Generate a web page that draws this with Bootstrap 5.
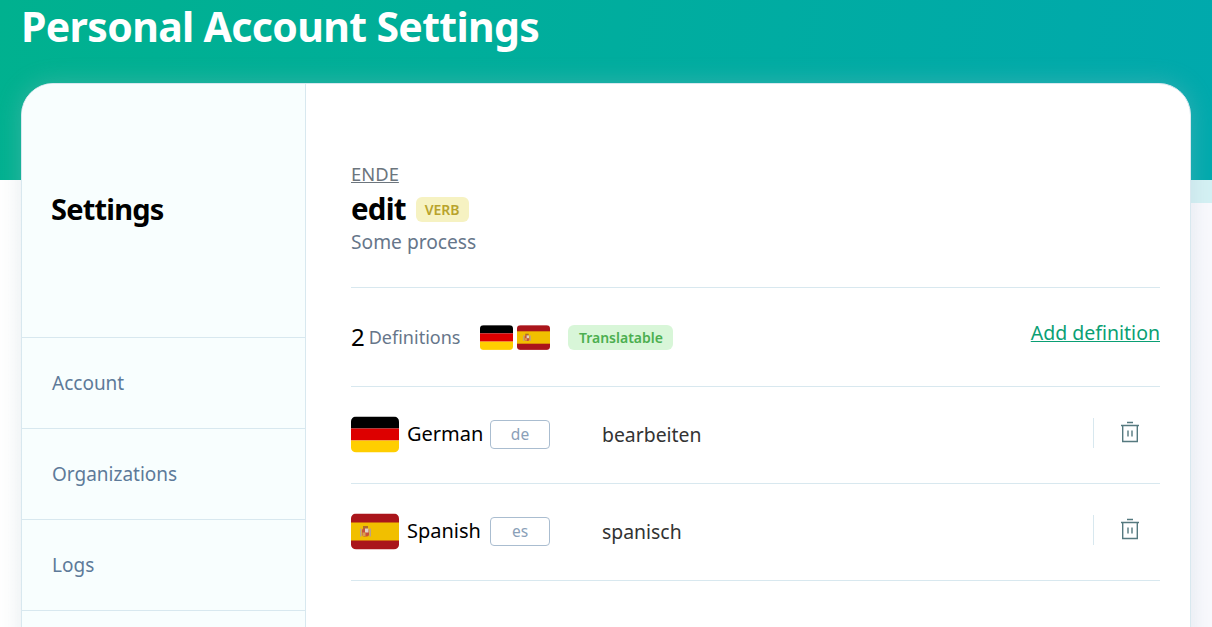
<!DOCTYPE html>
<html lang="en">
<head>
    <meta charset="UTF-8">
    <meta name="viewport" content="width=device-width, initial-scale=1.0">
    <title>Personal Account Settings</title>
    <link href="https://cdn.jsdelivr.net/npm/bootstrap@5.3.0/dist/css/bootstrap.min.css" rel="stylesheet">
    <style>
        html, body { height: 100%; overflow: hidden; }
        body {
            font-family: "Noto Sans", "Open Sans", sans-serif;
            background:
                linear-gradient(100deg, #00b18f 0%, #00a9ad 100%) 0 0 / 100% 180px no-repeat,
                linear-gradient(#d4f1f4, #d4f1f4) 100% 180px / 21px 23px no-repeat,
                linear-gradient(90deg, #fff 0%, #f9f9fd 100%);
        }
        .page-wrap { padding: 0 21px; height: 627px; overflow: hidden; }
        .page-title {
            font-size: 41px; font-weight: 700; color: #fff; line-height: 52px;
            height: 83px; margin: 0; letter-spacing: -.66px;
        }
        .settings-box {
            height: 600px; background: #fff; border: 1px solid #d8e8ef; border-radius: 32px;
            overflow: hidden; box-shadow: 0 0 24px rgba(170, 190, 200, .3);
        }
        .side-col { width: 284px; flex: none; background: #f8fefe; border-right: 1px solid #d8e8ef; }
        .side-head { height: 253px; padding: 0 29px 4px; font-size: 29px; font-weight: 700; color: #000; letter-spacing: -.8px; }
        .side-link { display: block; height: 91px; line-height: 90px; padding-left: 30px; font-size: 19px; color: #5d7a99; border-top: 1px solid #d8e8ef; text-decoration: none; }
        .main-col { flex: 1; padding: 77px 30px 0 45px; }
        .parent-link { font-size: 18.4px; line-height: 26px; color: #6c757d; display: block; width: max-content; }
        .word-head { margin-top: 2px; }
        .word-title { font-size: 29.5px; font-weight: 700; line-height: 40px; color: #000; letter-spacing: -.8px; }
        .pos-tag { font-size: 14px; font-weight: 600; color: #b8a32c; background: #f6f2c2; padding: 3px 9px; border-radius: 6px; line-height: 19px; margin-left: 2px; }
        .word-desc { font-size: 19.2px; line-height: 26px; color: #66768a; }
        .word-block { padding-bottom: 32px; }
        .info-row { height: 99px; border-top: 1px solid #d8e8ef; }
        .info-row .num { font-size: 24px; color: #000; line-height: 1; margin-right: 4px; }
        .info-row .lbl { font-size: 18px; color: #66768a; margin-top: 1px; margin-right: 20px; }
        .trans-tag { font-size: 14px; font-weight: 600; color: #4caf50; background: #d8f6d8; padding: 3px 10.5px; border-radius: 6px; line-height: 19px; margin-left: 18px; }
        .add-link { font-size: 19.5px; color: #0a9f74; margin-top: -8px; }
        .flag-sm { width: 33px; height: 25px; display: block; }
        .flag-lg { width: 48px; height: 37px; display: block; margin-top: -2px; }
        .def-row { height: 97px; border-top: 1px solid #d8e8ef; }
        .def-row:last-child { border-bottom: 1px solid #d8e8ef; height: 98px; }
        .lang-name { font-size: 20px; color: #000; margin-left: 8px; width: 83px; margin-top: -2px; }
        .lang-code { width: 60px; height: 29px; border: 1px solid #aabdd0; border-radius: 4px; color: #8aa0b8; font-size: 15.5px; line-height: 26px; text-align: center; margin-top: -2px; }
        .def-text { font-size: 19.4px; color: #333; margin-left: 52px; }
        .del-cell { width: 67px; height: 30px; border-left: 1px solid #d8e8ef; margin-left: auto; padding-left: 26px; margin-top: -4px; }
    </style>
</head>
<body>
    <svg width="0" height="0" class="d-block">
        <defs>
            <clipPath id="flagClip"><rect x="0" y="0" width="48" height="36" rx="5"/></clipPath>
            <g id="flag-de" clip-path="url(#flagClip)">
                <rect width="48" height="12" fill="#000"/>
                <rect y="12" width="48" height="12" fill="#dd0000"/>
                <rect y="24" width="48" height="12" fill="#ffce00"/>
            </g>
            <g id="flag-es" clip-path="url(#flagClip)">
                <rect width="48" height="36" fill="#aa151b"/>
                <rect y="9" width="48" height="18" fill="#f1bf00"/>
                <rect x="12" y="12.5" width="5" height="3" fill="#ad6b2c"/>
                <rect x="11" y="15" width="7" height="8" rx="2" fill="#c8503a"/>
                <rect x="14" y="15" width="3.5" height="4" fill="#e0d4c4"/>
                <rect x="11.5" y="19" width="3" height="3.5" fill="#d9a050"/>
                <rect x="9" y="15" width="1.5" height="8" fill="#b9a08c"/>
                <rect x="18.5" y="15" width="1.5" height="8" fill="#b9a08c"/>
            </g>
        </defs>
    </svg>

    <div class="page-wrap">
        <h1 class="page-title">Personal Account Settings</h1>
        <div class="settings-box d-flex">
            <div class="side-col">
                <div class="side-head d-flex align-items-center">Settings</div>
                <a class="side-link" href="#">Account</a>
                <a class="side-link" href="#">Organizations</a>
                <a class="side-link" href="#">Logs</a>
                <a class="side-link" href="#"></a>
            </div>
            <div class="main-col">
                <div class="word-block">
                    <a class="parent-link" href="#">ENDE</a>
                    <div class="word-head d-flex align-items-center gap-2">
                        <span class="word-title">edit</span>
                        <span class="pos-tag">VERB</span>
                    </div>
                    <div class="word-desc">Some process</div>
                </div>

                <div class="info-row d-flex align-items-center">
                    <span class="num">2</span>
                    <span class="lbl">Definitions</span>
                    <svg class="flag-sm" viewBox="0 0 48 36"><use href="#flag-de"/></svg>
                    <svg class="flag-sm ms-1" viewBox="0 0 48 36"><use href="#flag-es"/></svg>
                    <span class="trans-tag">Translatable</span>
                    <a class="add-link ms-auto" href="#">Add definition</a>
                </div>

                <div class="def-row d-flex align-items-center">
                    <svg class="flag-lg" viewBox="0 0 48 36"><use href="#flag-de"/></svg>
                    <span class="lang-name">German</span>
                    <span class="lang-code">de</span>
                    <span class="def-text">bearbeiten</span>
                    <div class="del-cell">
                        <svg width="20" height="24" viewBox="0 0 20 24" fill="none" stroke="#55797f" stroke-width="1.4">
                            <path d="M7 2.5h6M1 5.5h18M2.7 5.5v16h14.6v-16M8 10.5v6M12 10.5v6"/>
                        </svg>
                    </div>
                </div>
                <div class="def-row d-flex align-items-center">
                    <svg class="flag-lg" viewBox="0 0 48 36"><use href="#flag-es"/></svg>
                    <span class="lang-name">Spanish</span>
                    <span class="lang-code">es</span>
                    <span class="def-text">spanisch</span>
                    <div class="del-cell">
                        <svg width="20" height="24" viewBox="0 0 20 24" fill="none" stroke="#55797f" stroke-width="1.4">
                            <path d="M7 2.5h6M1 5.5h18M2.7 5.5v16h14.6v-16M8 10.5v6M12 10.5v6"/>
                        </svg>
                    </div>
                </div>
            </div>
        </div>
    </div>

    <script src="https://cdn.jsdelivr.net/npm/bootstrap@5.3.0/dist/js/bootstrap.bundle.min.js"></script>
</body>
</html>
